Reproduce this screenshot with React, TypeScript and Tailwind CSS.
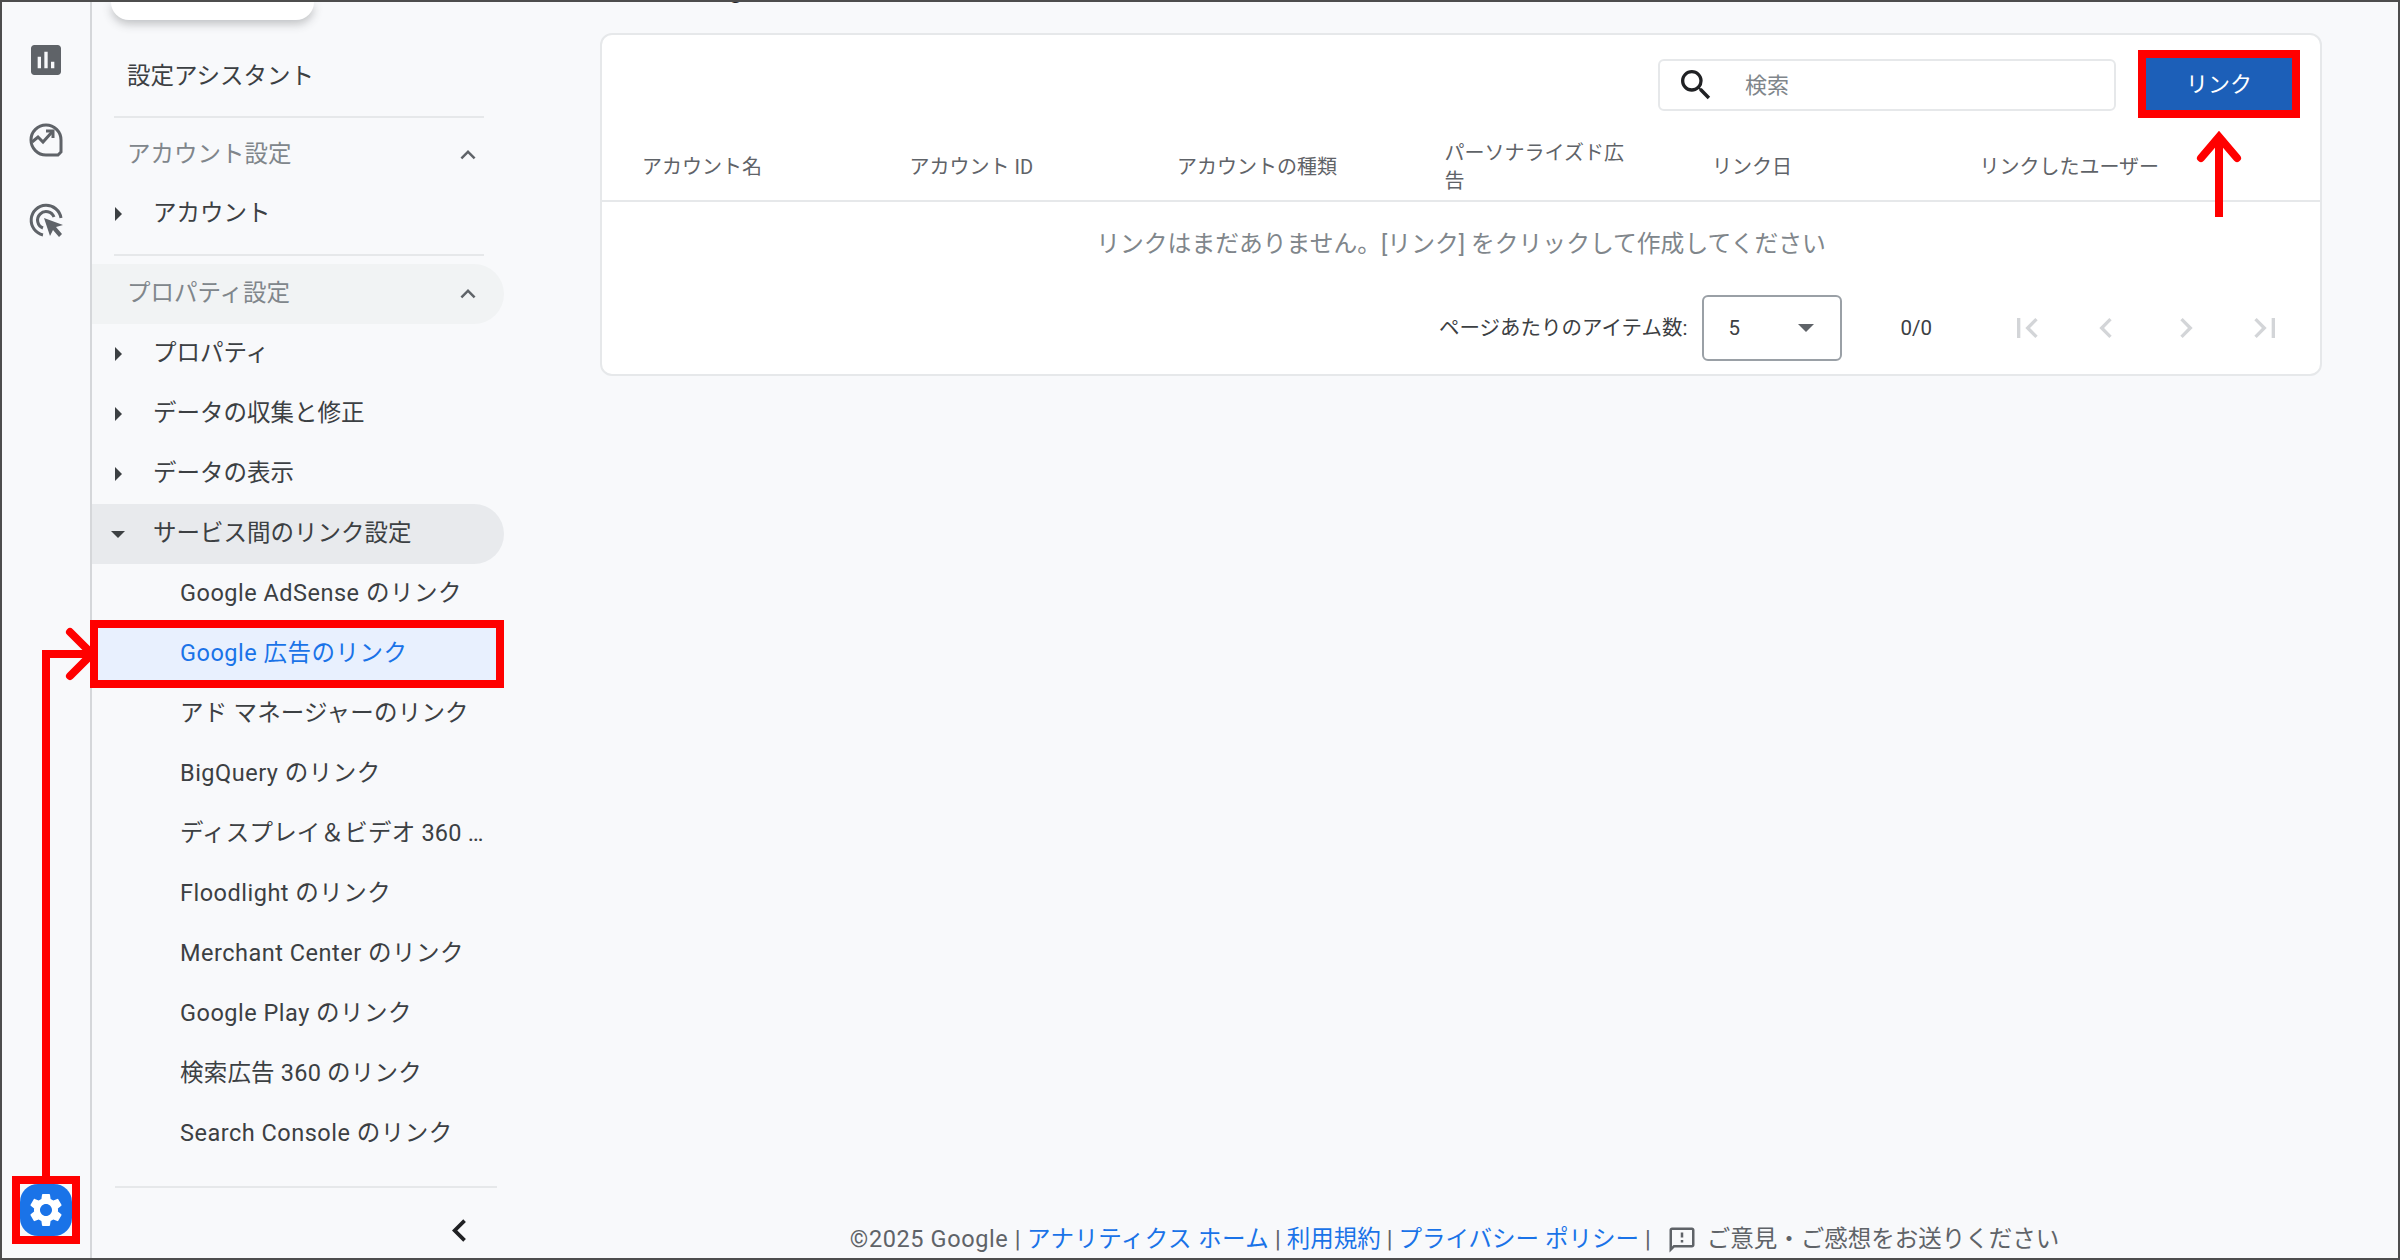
import React from 'react'
import {
  MdChevronLeft,
  MdChevronRight,
  MdExpandLess,
  MdFirstPage,
  MdInsertChart,
  MdLastPage,
  MdOutlineFeedback,
  MdSearch,
  MdSettings,
} from 'react-icons/md'

const FONT = "font-[Roboto,'Noto_Sans_CJK_JP',sans-serif]"

const COLUMNS = ['アカウント名', 'アカウント ID', 'アカウントの種類', 'パーソナライズド広告', 'リンク日', 'リンクしたユーザー']

const LINKS = [
  'Google AdSense のリンク',
  'Google 広告のリンク',
  'アド マネージャーのリンク',
  'BigQuery のリンク',
  'ディスプレイ＆ビデオ 360 のリンク',
  'Floodlight のリンク',
  'Merchant Center のリンク',
  'Google Play のリンク',
  '検索広告 360 のリンク',
  'Search Console のリンク',
]

const ExploreIcon = () => (
  <svg viewBox="0 0 34 34" className="h-[34px] w-[34px]" fill="none" stroke="#5f6368" strokeWidth="3">
    <path d="M32 29V17A15 15 0 1 0 17 32H29Z" />
    <path d="M3 19l6-5 5 5 9-10" />
    <path d="M17 8h7v7" />
  </svg>
)

const AdvertisingIcon = () => (
  <svg viewBox="0 0 34 34" className="h-[34px] w-[34px]" fill="none" stroke="#5f6368" strokeWidth="3">
    <path d="M14 32A15 15 0 1 1 32 15" />
    <path d="M14 25A8.500 8.500 0 1 1 25 14" />
    <path d="M15 15l19 7-7 2 6 7-3 3-6-7-3 6Z" fill="#5f6368" stroke="none" />
  </svg>
)

const RightTriangle = () => (
  <svg viewBox="0 0 7 14" className="h-3.5 w-[7px]" fill="#3c4043">
    <path d="M0 0l7 7-7 7Z" />
  </svg>
)

const DownTriangle = () => (
  <svg viewBox="0 0 14 7" className="h-[7px] w-3.5" fill="#3c4043">
    <path d="M0 0h14l-7 7Z" />
  </svg>
)

const Divider = ({ className }: { className: string }) => <div className={`h-0.5 bg-[#e6e8ea] ${className}`} />

const SectionRow = ({ label, shaded }: { label: string; shaded?: boolean }) => (
  <div className={`flex h-[60px] items-center justify-between rounded-r-full pl-[35px] pr-[21px] text-[23.5px] text-[#80868b] ${shaded ? 'bg-[#f1f3f4]' : 'pt-0.5'}`}>
    <span>{label}</span>
    <MdExpandLess className="text-[30px] text-[#5f6368]" />
  </div>
)

const TreeRow = ({ label, open }: { label: string; open?: boolean }) => (
  <div className={`flex h-[60px] items-center rounded-r-full text-[23.5px] text-[#3c4043] ${open ? 'bg-[#e8eaed]' : ''}`}>
    <span className="mr-[9px] flex w-[52px] shrink-0 justify-center">{open ? <DownTriangle /> : <RightTriangle />}</span>
    <span>{label}</span>
  </div>
)

const Sidebar = () => (
  <aside className="w-[412px] shrink-0">
    <div className="ml-[19px] h-[18px] w-[203px] rounded-b-[24px] bg-white shadow-[0_4px_10px_rgba(60,64,67,0.3)]" />
    <div className="mt-[26px] flex h-[60px] items-center pl-[35px] pt-0.5 text-[23.5px] text-[#3c4043]">設定アシスタント</div>
    <Divider className="ml-[22px] mt-[10px] w-[370px]" />
    <div className="mt-1.5">
      <SectionRow label="アカウント設定" />
    </div>
    <TreeRow label="アカウント" />
    <Divider className="ml-[22px] mt-2.5 w-[370px]" />
    <div className="mt-2">
      <SectionRow label="プロパティ設定" shaded />
    </div>
    <TreeRow label="プロパティ" />
    <TreeRow label="データの収集と修正" />
    <TreeRow label="データの表示" />
    <TreeRow label="サービス間のリンク設定" open />
    {LINKS.map((link) => {
      const active = link === 'Google 広告のリンク'
      // latin labels run a little wider in the original face
      const spacing = /^[A-Z]/.test(link) ? 'tracking-[0.5px]' : 'tracking-[0.2px]'
      return (
        <div
          key={link}
          className={`flex h-[60px] items-center pl-[88px] pr-5 text-[23.5px] ${spacing} ${active ? 'bg-[#e8f0fe] text-[#1a73e8]' : 'text-[#3c4043]'}`}
        >
          <span className="truncate">{link}</span>
        </div>
      )
    })}
    <Divider className="ml-[23px] mt-[22px] w-[382px]" />
    <div className="mt-5 flex h-11 items-center justify-end pr-[22px]">
      <MdChevronLeft className="text-[45px] text-[#202124]" />
    </div>
  </aside>
)

const Pager = () => (
  <div className="flex h-[82px] items-center justify-end pr-[15px] text-[20.5px] text-[#3c4043]">
    <span>ページあたりのアイテム数:</span>
    <div className="ml-[15px] flex h-[66px] w-[140px] items-center justify-between rounded-md border-2 border-[#9aa0a6] pl-6 pr-[26px]">
      <span>5</span>
      <svg viewBox="0 0 16 8" className="h-2 w-4" fill="#5f6368">
        <path d="M0 0h16l-8 8Z" />
      </svg>
    </div>
    <span className="ml-[58px]">0/0</span>
    <div className="ml-[55px] flex text-[40px] text-[#d3d5d8]">
      <span className="flex w-[79.5px] justify-center"><MdFirstPage /></span>
      <span className="flex w-[79.5px] justify-center"><MdChevronLeft /></span>
      <span className="flex w-[79.5px] justify-center"><MdChevronRight /></span>
      <span className="flex w-[79.5px] justify-center"><MdLastPage /></span>
    </div>
  </div>
)

const LinkCard = () => (
  <section className="ml-24 mt-[29px] w-[1722px] rounded-xl border-2 border-[#e6e8ea] bg-white pb-[5px]">
    <div className="flex justify-end gap-7 pr-[26px] pt-6">
      <div className="flex h-[52px] w-[458px] items-center rounded-md border-2 border-[#e6e8ea] pl-[16px] text-[22px] text-[#80868b]">
        <MdSearch className="text-[40px] text-[#202124]" />
        <span className="ml-[29px]">検索</span>
      </div>
      <button className="-mt-0.5 h-[54px] w-[150px] bg-[#1c5fb8] text-[22px] text-white">リンク</button>
    </div>
    <div className="mt-[23px] grid h-[68px] grid-cols-[repeat(6,267.5px)] items-center border-b-2 border-[#e6e8ea] pl-10 text-[20px] leading-7 text-[#5f6368]">
      {COLUMNS.map((col) => (
        <div key={col} className="pr-[70px]">{col}</div>
      ))}
    </div>
    <div className="flex h-[85px] items-center justify-center text-[23.8px] text-[#80868b]">
      リンクはまだありません。[リンク] をクリックして作成してください
    </div>
    <Pager />
  </section>
)

const Footer = () => (
  <footer className="mt-auto flex h-10 items-center justify-center gap-[6px] whitespace-nowrap pl-[7px] pt-1 text-[23.5px] text-[#5f6368]">
    <span className="tracking-[0.6px]">©2025 Google |</span>
    <a className="tracking-[0.4px] text-[#1a73e8]">アナリティクス ホーム</a>
    <span>|</span>
    <a className="text-[#1a73e8]">利用規約</a>
    <span>|</span>
    <a className="text-[#1a73e8]">プライバシー ポリシー</a>
    <span>|</span>
    <MdOutlineFeedback className="ml-2.5 text-[30px]" />
    <span className="ml-1">ご意見・ご感想をお送りください</span>
  </footer>
)

// red marks laid over the screenshot
const Annotations = () => (
  <>
    <div className="absolute left-[10px] top-[1174px] h-[68px] w-[68px] border-8 border-[#ff0000]" />
    <div className="absolute left-[88px] top-[618px] h-[68px] w-[414px] border-8 border-[#ff0000]" />
    <div className="absolute left-[2136px] top-[48px] h-[68px] w-[162px] border-8 border-[#ff0000]" />
    <svg className="absolute left-0 top-0 h-[1256px] w-[2396px]" viewBox="0 0 2396 1256" fill="none" stroke="#ff0000" strokeWidth="8">
      <path d="M44 1174V652H86" />
      <path d="M68 630L90 652L68 674" strokeLinecap="round" />
      <path d="M2217 215V136" />
      <path d="M2199 156L2217 135L2235 156" strokeLinecap="round" />
    </svg>
  </>
)

export default function App() {
  return (
    <div className={`relative flex h-[1260px] w-[2400px] overflow-hidden border-2 border-[#4d4d4d] bg-[#f8f9fb] ${FONT}`}>
      <nav className="flex w-[90px] shrink-0 flex-col items-center border-r-2 border-[#d5d7da] pb-[22px]">
        <div className="mt-[18px] flex flex-col items-center">
          <span className="flex h-20 items-center"><MdInsertChart className="text-[40px] text-[#5f6368]" /></span>
          <span className="flex h-20 items-center"><ExploreIcon /></span>
          <span className="flex h-20 items-center"><AdvertisingIcon /></span>
        </div>
        <div className="mt-auto flex h-[52px] w-[52px] items-center justify-center rounded-[18px] bg-[#1a73e8]">
          <MdSettings className="text-[40px] text-white" />
        </div>
      </nav>
      <Sidebar />
      <main className="flex min-w-0 flex-1 flex-col">
        <h1 className="-mt-[30px] ml-[173px] h-8 text-[28px] leading-8 text-[#202124]">Google 広告のリンク</h1>
        <LinkCard />
        <Footer />
      </main>
      <Annotations />
    </div>
  )
}
